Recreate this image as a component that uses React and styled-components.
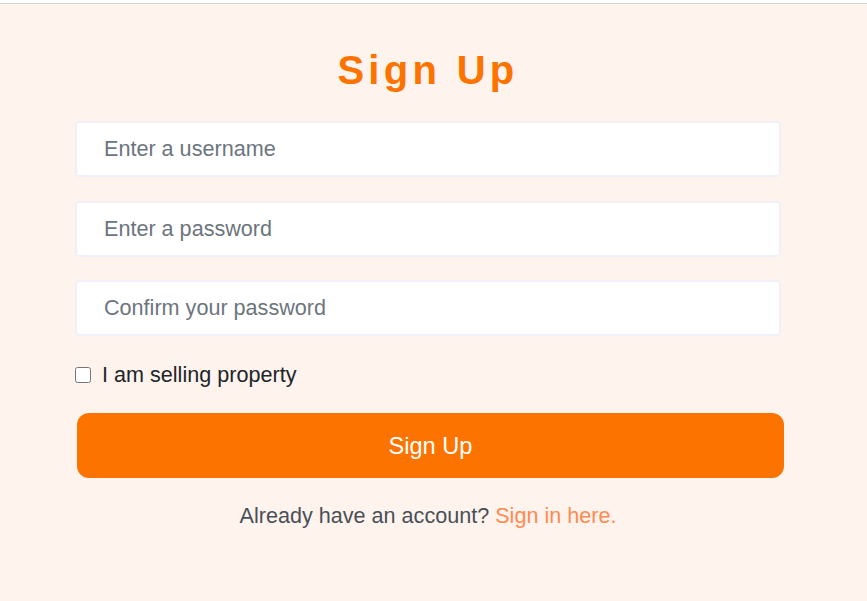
import React from "react";
import styled, { createGlobalStyle } from "styled-components";

const Global = createGlobalStyle`
  html, body { margin: 0; padding: 0; background: #fff3ee; }
  body { font-family: "Liberation Sans", Arial, sans-serif; }
  * { box-sizing: border-box; }
`;

const TopRule = styled.div`
  height: 4px;
  background: #ffffff;
  border-bottom: 1px solid #d6d4d2;
`;

const Page = styled.main`
  background: #fff3ee;
  min-height: 597px;
  padding: 42px 0 40px 75px;
`;

const Form = styled.form`
  width: 706px;
  display: flex;
  flex-direction: column;
`;

const Title = styled.h1`
  margin: 0 0 27px;
  font-size: 40px;
  line-height: 48px;
  font-weight: 700;
  letter-spacing: 4.3px;
  color: #fc7300;
  text-align: center;
`;

const Input = styled.input`
  width: 706px;
  height: 56px;
  margin-bottom: ${(p) => p.$gap}px;
  padding: 0 27px;
  border: 2px solid #f0effa;
  border-radius: 4px;
  background: #ffffff;
  font-family: inherit;
  font-size: 21.6px;
  color: #212529;
  outline: none;
  &::placeholder { color: #6c757d; opacity: 1; }
`;

const CheckRow = styled.label`
  display: flex;
  align-items: center;
  height: 24px;
  margin-top: 27px;
  font-size: 21.6px;
  color: #212529;
  cursor: pointer;
`;

const Check = styled.input`
  width: 16px;
  height: 16px;
  margin: 0 11px 0 0;
`;

const Button = styled.button`
  width: 707px;
  height: 65px;
  margin: 26px 0 0 2px;
  padding: 2px 0 0;
  border: none;
  border-radius: 12px;
  background: #fc7300;
  color: #ffffff;
  font-family: inherit;
  font-size: 23.6px;
  cursor: pointer;
`;

const Footer = styled.p`
  margin: 22px 0 0;
  text-align: center;
  font-size: 21.6px;
  line-height: 32px;
  color: #495057;
`;

const Link = styled.a`
  color: #ff8a50;
  text-decoration: none;
`;

export default function App() {
  return (
    <>
      <Global />
      <TopRule />
      <Page>
        <Form onSubmit={(e) => e.preventDefault()}>
          <Title>Sign Up</Title>
          <Input type="text" placeholder="Enter a username" $gap={24} />
          <Input type="password" placeholder="Enter a password" $gap={23} />
          <Input type="password" placeholder="Confirm your password" $gap={0} />
          <CheckRow>
            <Check type="checkbox" />
            I am selling property
          </CheckRow>
          <Button type="submit">Sign Up</Button>
          <Footer>
            Already have an account? <Link href="#">Sign in here.</Link>
          </Footer>
        </Form>
      </Page>
    </>
  );
}
